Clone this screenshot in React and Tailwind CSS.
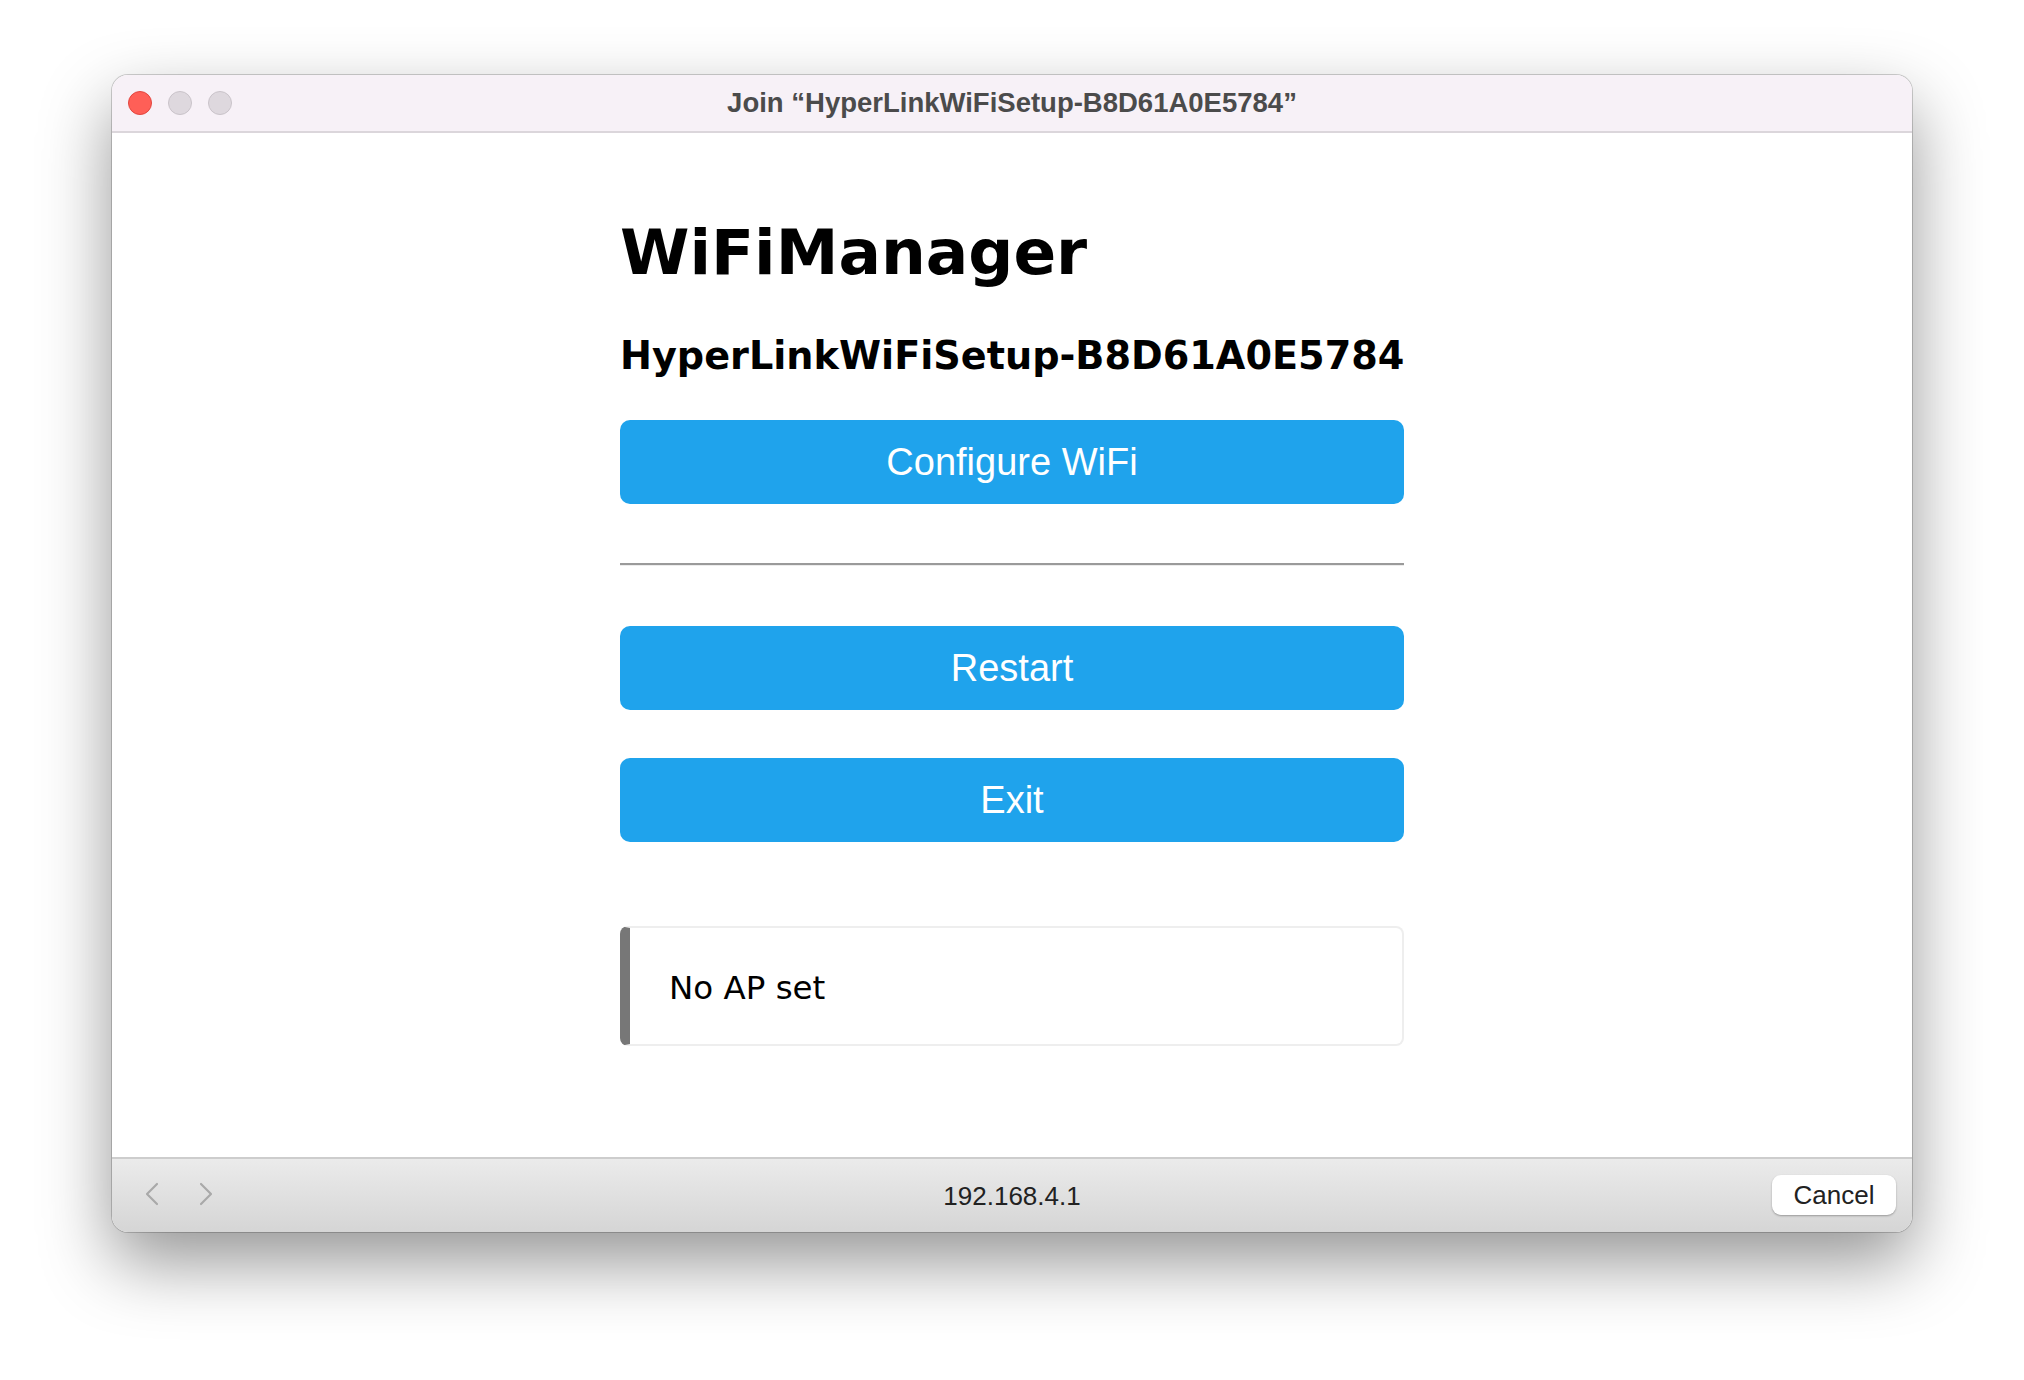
export default function App() {
  const buttons = ["Configure WiFi", "Restart", "Exit"];

  return (
    <div className="w-full h-[1380px] bg-white pt-[75px] pl-[112px] overflow-hidden">
      {/* Window */}
      <div className="w-[1800px] h-[1157px] flex flex-col rounded-[16px] overflow-hidden bg-white shadow-[0_30px_70px_rgba(0,0,0,0.42),0_0_0_1px_rgba(0,0,0,0.18)]">
        {/* Title bar */}
        <div className="relative h-[58px] shrink-0 bg-[#f7f1f7] border-b-2 border-[#dbd6db] flex items-center justify-center">
          <div className="absolute left-[16px] top-[16px] flex gap-[16px]">
            <span className="w-[24px] h-[24px] rounded-full bg-[#ff5f57] border border-[#e2463f]" />
            <span className="w-[24px] h-[24px] rounded-full bg-[#ded8de] border border-[#c9c3c9]" />
            <span className="w-[24px] h-[24px] rounded-full bg-[#ded8de] border border-[#c9c3c9]" />
          </div>
          <span className="font-['Liberation_Sans',Arial,sans-serif] font-bold text-[27.5px] text-[#4b4b4b] leading-none">
            Join “HyperLinkWiFiSetup-B8D61A0E5784”
          </span>
        </div>

        {/* Page content */}
        <div className="flex-1 flex justify-center">
          <div className="w-[784px] pt-[88px] flex flex-col">
            <h1 className="font-['DejaVu_Sans',Verdana,sans-serif] font-bold text-[63px] leading-[64px] text-black">
              WiFiManager
            </h1>
            <h3 className="mt-[52px] whitespace-nowrap font-['DejaVu_Sans',Verdana,sans-serif] font-bold text-[38.2px] leading-[38px] text-black">
              HyperLinkWiFiSetup-B8D61A0E5784
            </h3>

            <button className="mt-[45px] h-[84px] w-full rounded-[10px] bg-[#1fa3ec] text-white font-['Liberation_Sans',Arial,sans-serif] text-[38px]">
              {buttons[0]}
            </button>

            <div className="mt-[59px] h-[3px] border-t-2 border-[#9a9a9a] border-b border-b-[#ececec]" />

            <button className="mt-[60px] h-[84px] w-full rounded-[10px] bg-[#1fa3ec] text-white font-['Liberation_Sans',Arial,sans-serif] text-[38px]">
              {buttons[1]}
            </button>
            <button className="mt-[48px] h-[84px] w-full rounded-[10px] bg-[#1fa3ec] text-white font-['Liberation_Sans',Arial,sans-serif] text-[38px]">
              {buttons[2]}
            </button>

            <div className="mt-[84px] h-[120px] flex items-center rounded-[8px] border-2 border-[#eeeeee] border-l-[10px] border-l-[#777777] pl-[39px] pt-[4px]">
              <span className="font-['DejaVu_Sans',Verdana,sans-serif] text-[32.5px] text-black">
                No AP set
              </span>
            </div>
          </div>
        </div>

        {/* Bottom bar */}
        <div className="relative h-[75px] shrink-0 border-t-2 border-[#cdcdcd] bg-gradient-to-b from-[#ebebeb] to-[#d5d5d5] flex items-center justify-center">
          <div className="absolute left-[33px] top-[23px] flex gap-[40px]">
            <svg width="14" height="24" viewBox="0 0 14 24" fill="none">
              <polyline points="12,2 2,12 12,22" stroke="#a9a9a9" strokeWidth="2.2" strokeLinecap="round" strokeLinejoin="round" />
            </svg>
            <svg width="14" height="24" viewBox="0 0 14 24" fill="none">
              <polyline points="2,2 12,12 2,22" stroke="#a9a9a9" strokeWidth="2.2" strokeLinecap="round" strokeLinejoin="round" />
            </svg>
          </div>
          <span className="font-['Liberation_Sans',Arial,sans-serif] text-[26px] text-[#222222] leading-none">
            192.168.4.1
          </span>
          <button className="absolute right-[16px] top-[16px] w-[124px] h-[40px] rounded-[9px] bg-white shadow-[0_1px_2px_rgba(0,0,0,0.3)] font-['Liberation_Sans',Arial,sans-serif] text-[26px] text-[#222222] leading-none">
            Cancel
          </button>
        </div>
      </div>
    </div>
  );
}
